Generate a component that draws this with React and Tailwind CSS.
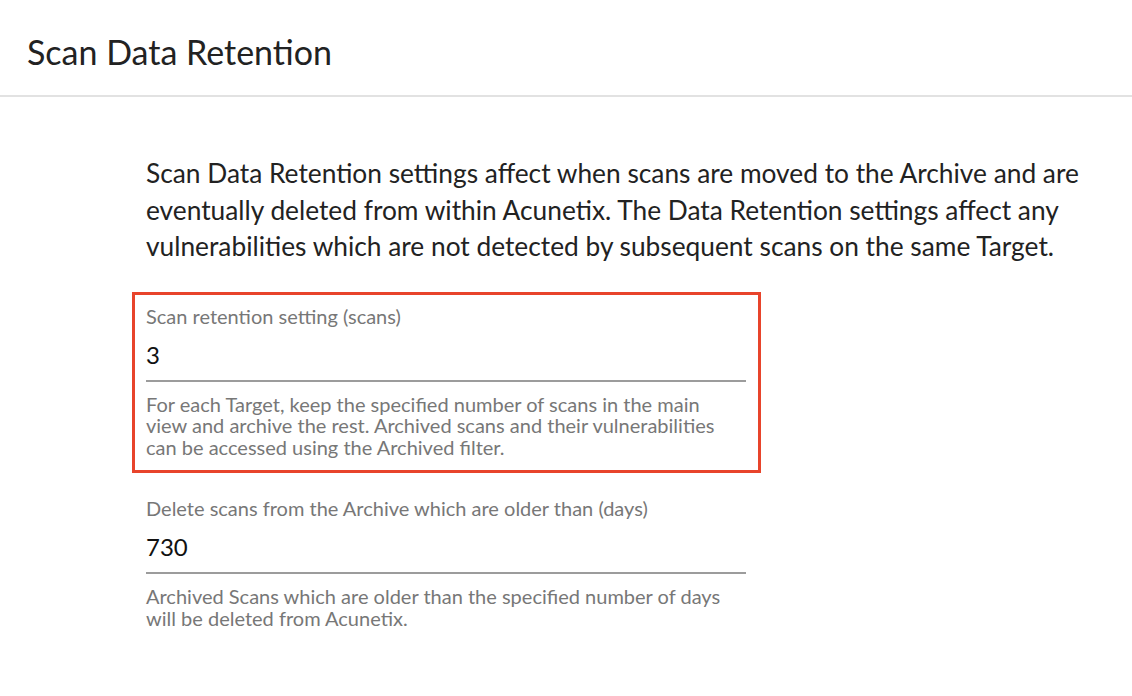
import React from 'react';

const font = { fontFamily: 'Lato, "Open Sans", sans-serif' };

const Field = ({ label, value, help }) => (
  <div className="w-[600px]">
    <div className="text-[20px] leading-[24px] text-[#777777]">{label}</div>
    <div className="mt-[12px] text-[24px] leading-[30px] text-[#111111]">{value}</div>
    <div className="mt-[10px] h-[2px] bg-[#9c9c9c]" />
    <p className="mt-[12px] w-[585px] text-[20px] leading-[21.5px] text-[#777777]">{help}</p>
  </div>
);

export default function App() {
  return (
    <div className="min-h-screen bg-white" style={font}>
      <div className="flex h-[97px] items-center border-b-2 border-[#e2e2e2] pl-[27px] pt-[8px]">
        <h1 className="text-[34px] leading-none text-[#222222]">Scan Data Retention</h1>
      </div>

      <div className="ml-[146px] w-[945px] pt-[58px]">
        <p className="text-[26.3px] leading-[36.5px] text-[#222222]">
          Scan Data Retention settings affect when scans are moved to the Archive and are
          eventually deleted from within Acunetix. The Data Retention settings affect any
          vulnerabilities which are not detected by subsequent scans on the same Target.
        </p>

        <div className="-ml-[14px] mt-[27px] w-[629px] border-[3px] border-[#e8442b] px-[11px] pb-[12px] pt-[9px]">
          <Field
            label="Scan retention setting (scans)"
            value="3"
            help="For each Target, keep the specified number of scans in the main view and archive the rest. Archived scans and their vulnerabilities can be accessed using the Archived filter."
          />
        </div>

        <div className="mt-[23px]">
          <Field
            label="Delete scans from the Archive which are older than (days)"
            value="730"
            help="Archived Scans which are older than the specified number of days will be deleted from Acunetix."
          />
        </div>
      </div>
    </div>
  );
}
